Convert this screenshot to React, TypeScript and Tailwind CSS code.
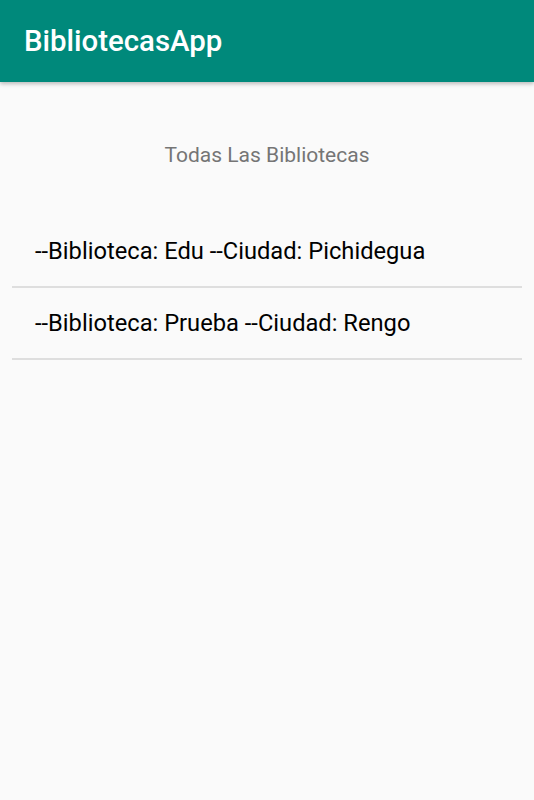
export default function App() {
  const items = [
    "--Biblioteca: Edu --Ciudad: Pichidegua",
    "--Biblioteca: Prueba --Ciudad: Rengo",
  ];
  return (
    <div
      className="w-[534px] h-[800px] bg-[#fafafa] flex flex-col"
      style={{ fontFamily: "Roboto, sans-serif" }}
    >
      <div className="h-[82px] bg-[#00897b] flex items-center pl-[24px] pt-[2px] shadow-[0_2px_4px_rgba(0,0,0,0.25)] relative z-10">
        <span className="text-white text-[29.4px] font-medium leading-none">BibliotecasApp</span>
      </div>
      <div className="flex justify-center pt-[61px]">
        <span className="text-[#757575] text-[21px] leading-[24px]">Todas Las Bibliotecas</span>
      </div>
      <div className="mt-[49px] px-[12px] flex flex-col">
        {items.map((t) => (
          <div key={t} className="h-[72px] flex items-center pl-[23px] pt-[2px] border-b-2 border-[#dedede]">
            <span className="text-black text-[23.7px] leading-none">{t}</span>
          </div>
        ))}
      </div>
    </div>
  );
}
